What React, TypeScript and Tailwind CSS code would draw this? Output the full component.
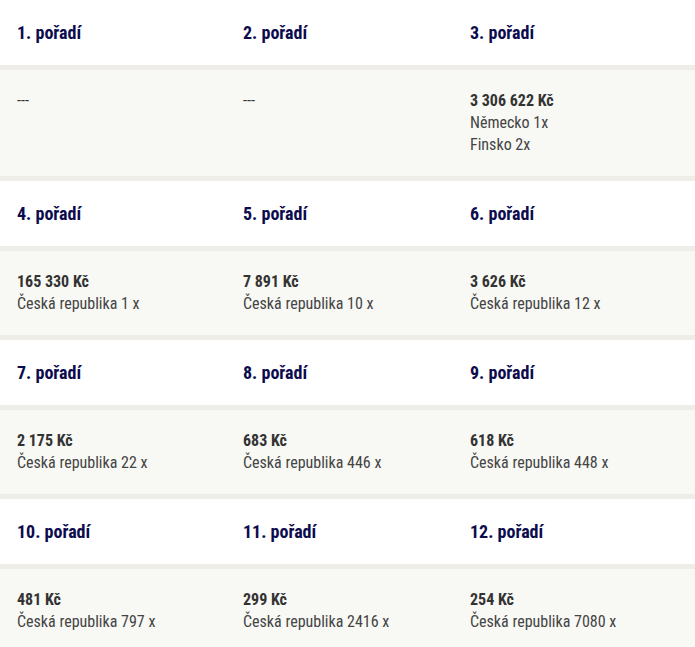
const rows = [
  [
    { rank: 1, lines: [] as string[], price: '' },
    { rank: 2, lines: [], price: '' },
    { rank: 3, price: '3 306 622 Kč', lines: ['Německo 1x', 'Finsko 2x'] },
  ],
  [
    { rank: 4, price: '165 330 Kč', lines: ['Česká republika 1 x'] },
    { rank: 5, price: '7 891 Kč', lines: ['Česká republika 10 x'] },
    { rank: 6, price: '3 626 Kč', lines: ['Česká republika 12 x'] },
  ],
  [
    { rank: 7, price: '2 175 Kč', lines: ['Česká republika 22 x'] },
    { rank: 8, price: '683 Kč', lines: ['Česká republika 446 x'] },
    { rank: 9, price: '618 Kč', lines: ['Česká republika 448 x'] },
  ],
  [
    { rank: 10, price: '481 Kč', lines: ['Česká republika 797 x'] },
    { rank: 11, price: '299 Kč', lines: ['Česká republika 2416 x'] },
    { rank: 12, price: '254 Kč', lines: ['Česká republika 7080 x'] },
  ],
];

export default function App() {
  return (
    <div className="w-[695px] bg-white font-['Roboto_Condensed',Roboto,sans-serif]">
      {rows.map((row, i) => (
        <div key={i}>
          {/* header row */}
          <div className="grid h-[65px] grid-cols-[226px_227px_1fr] bg-white">
            {row.map((cell) => (
              <div key={cell.rank} className="flex items-center pl-[17px] text-[18px] font-bold text-[#0b0b4e]">
                {cell.rank}. pořadí
              </div>
            ))}
          </div>
          {/* body row */}
          <div className="grid grid-cols-[226px_227px_1fr] border-y-[5px] border-[#eeede7] bg-[#f8f8f4] py-[20px]">
            {row.map((cell) => (
              <div key={cell.rank} className="pl-[17px] text-[16px] leading-[22px] text-[#444]">
                {cell.price ? (
                  <>
                    <div className="font-bold text-[#333]">{cell.price}</div>
                    {cell.lines.map((l) => (
                      <div key={l}>{l}</div>
                    ))}
                  </>
                ) : (
                  <div className="text-[#333]">---</div>
                )}
              </div>
            ))}
          </div>
        </div>
      ))}
    </div>
  );
}
